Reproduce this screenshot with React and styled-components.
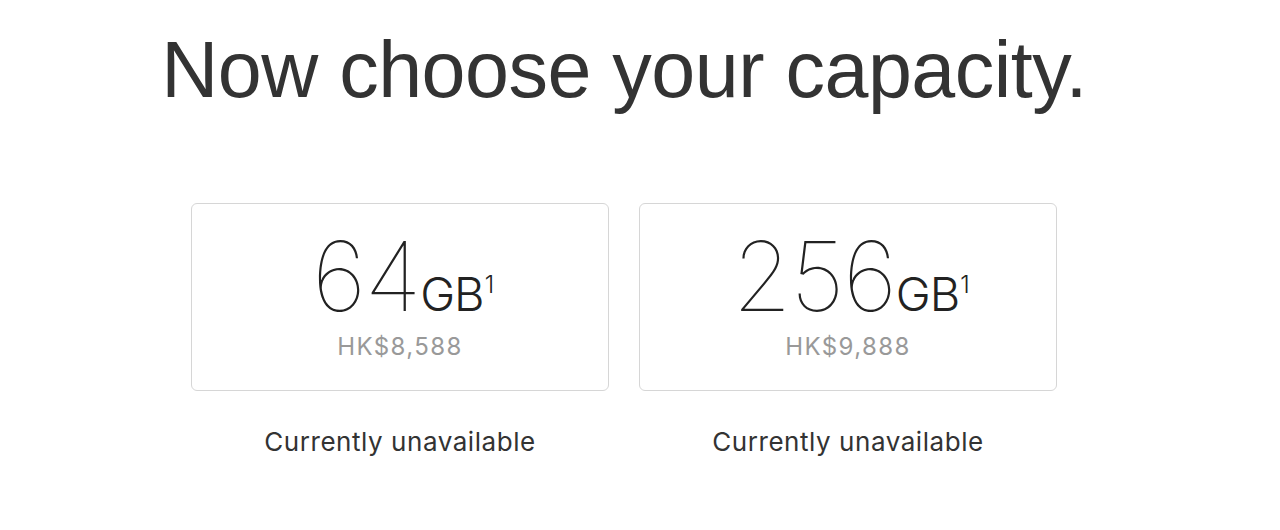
import React from "react";
import styled, { createGlobalStyle } from "styled-components";

const Global = createGlobalStyle`
  html, body { margin: 0; padding: 0; background: #fff; }
  body { font-family: "Liberation Sans", Arial, sans-serif; color: #333; }
`;

const Page = styled.main`
  width: 1280px;
  height: 530px;
  box-sizing: border-box;
  padding: 25px 32px 0 0;
  display: flex;
  flex-direction: column;
  align-items: center;
`;

const Heading = styled.h1`
  margin: 0;
  font-family: "Liberation Sans", Arial, sans-serif;
  font-weight: 400;
  font-size: 79px;
  line-height: 90px;
  letter-spacing: -0.5px;
  color: #333;
`;

const Options = styled.div`
  margin-top: 88px;
  display: flex;
  gap: 30px;
`;

const Option = styled.div`
  display: flex;
  flex-direction: column;
  align-items: center;
  gap: 36px;
`;

const Card = styled.button`
  width: 418px;
  height: 188px;
  box-sizing: border-box;
  border: 1px solid #d6d6d6;
  border-radius: 6px;
  background: #fff;
  display: flex;
  flex-direction: column;
  align-items: center;
  justify-content: center;
  padding: 4px 0 0;
  cursor: pointer;
`;

const Capacity = styled.div`
  display: flex;
  align-items: baseline;
  color: #222;
  line-height: 76px;
  padding-left: 6px;
`;

const Number = styled.span`
  font-family: Inter, sans-serif;
  font-weight: 100;
  font-size: 96px;
  letter-spacing: -1.5px;
`;

const Unit = styled.span`
  font-family: Inter, sans-serif;
  font-weight: 300;
  font-size: 47px;
  letter-spacing: -1px;
`;

const Footnote = styled.span`
  font-family: Inter, sans-serif;
  font-weight: 300;
  font-size: 24px;
  position: relative;
  top: -18px;
  margin-left: 1px;
`;

const Price = styled.div`
  margin-top: -8px;
  font-family: Inter, sans-serif;
  font-size: 24px;
  line-height: 28px;
  letter-spacing: 1.4px;
  color: #999;
`;

const Status = styled.div`
  font-family: Inter, sans-serif;
  font-size: 26px;
  letter-spacing: 0.55px;
  color: #333;
  margin-top: -1px;
`;

const options = [
  { size: "64", price: "HK$8,588" },
  { size: "256", price: "HK$9,888" },
];

export default function App() {
  return (
    <>
      <Global />
      <Page>
        <Heading>Now choose your capacity.</Heading>
        <Options>
          {options.map((o) => (
            <Option key={o.size}>
              <Card>
                <Capacity>
                  <Number>{o.size}</Number>
                  <Unit>GB</Unit>
                  <Footnote>1</Footnote>
                </Capacity>
                <Price>{o.price}</Price>
              </Card>
              <Status>Currently unavailable</Status>
            </Option>
          ))}
        </Options>
      </Page>
    </>
  );
}
